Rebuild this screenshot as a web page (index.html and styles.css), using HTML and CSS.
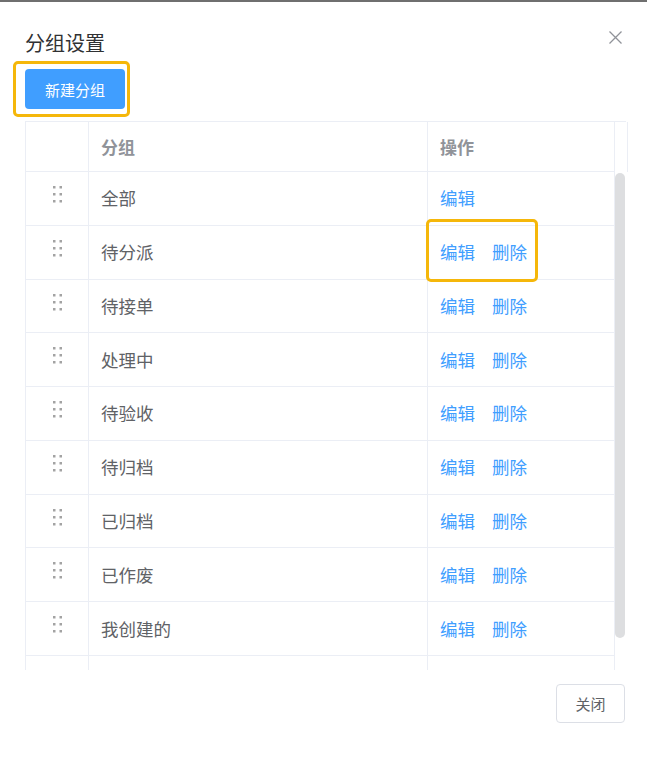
FILE: index.html
```html
<!DOCTYPE html>
<html>
<head>
  <meta charset="UTF-8">
  <title>分组设置</title>
  <link rel="stylesheet" href="styles.css">
</head>
<body>
  <div class="dialog">
    <div class="dialog-header">
      <span class="dialog-title">分组设置</span>
      <button class="dialog-close" type="button" aria-label="关闭">
        <svg width="13" height="13" viewBox="0 0 13 13"><path d="M0.5 0.5 L12.5 12.5 M12.5 0.5 L0.5 12.5" stroke="#909399" stroke-width="1.3" fill="none"/></svg>
      </button>
    </div>

    <div class="toolbar">
      <button class="btn-primary" type="button">新建分组</button>
    </div>

    <div class="group-table">
      <div class="table-head">
        <div class="cell cell-drag"></div>
        <div class="cell">分组</div>
        <div class="cell">操作</div>
        <div class="cell cell-gutter"></div>
      </div>
      <div class="table-body-wrap">
        <div class="table-body" id="table-body"></div>
        <div class="scrollbar"><div class="scrollbar-thumb"></div></div>
      </div>
    </div>

    <div class="dialog-footer">
      <button class="btn-default" type="button">关闭</button>
    </div>

    <!-- 标注框 -->
    <div class="mark mark-btn"></div>
    <div class="mark mark-ops"></div>
  </div>

  <script>
    const groups = ['全部', '待分派', '待接单', '处理中', '待验收', '待归档', '已归档', '已作废', '我创建的', ''];
    const body = document.getElementById('table-body');
    const dots = '<svg class="drag-icon" width="9" height="17" viewBox="0 0 9 17">' +
      '<rect x="0" y="0" width="2.5" height="2.5"/><rect x="6.5" y="0" width="2.5" height="2.5"/>' +
      '<rect x="0" y="7" width="2.5" height="2.5"/><rect x="6.5" y="7" width="2.5" height="2.5"/>' +
      '<rect x="0" y="14" width="2.5" height="2.5"/><rect x="6.5" y="14" width="2.5" height="2.5"/></svg>';

    groups.forEach((name, i) => {
      const row = document.createElement('div');
      row.className = 'table-row';
      let ops = '';
      if (name) {
        ops = '<a class="link">编辑</a>';
        if (i > 0) {
          ops += '<a class="link">删除</a>';
        }
      }
      row.innerHTML =
        '<div class="cell cell-drag">' + dots + '</div>' +
        '<div class="cell">' + name + '</div>' +
        '<div class="cell cell-ops">' + ops + '</div>';
      body.appendChild(row);
    });
  </script>
</body>
</html>
```

FILE: styles.css
```css
/* 页面 */
body {
  margin: 0;
  padding: 0;
  background-color: #fff;
  font-family: "Noto Sans CJK SC", "Microsoft YaHei", sans-serif;
}

button {
  font-family: inherit;
}

/* 弹窗 */
.dialog {
  position: relative;
  height: 758px;
  border-top: 2px solid #6f6f6f;
  padding: 0 22px 0 25px;
  background-color: #fff;
}

.dialog-header {
  display: flex;
  justify-content: space-between;
  align-items: flex-start;
  padding-top: 29px;
}

.dialog-title {
  font-size: 20px;
  line-height: 24px;
  color: #303133;
}

.dialog-close {
  border: none;
  background: none;
  padding: 0;
  margin: 0 3px 0 0;
  width: 13px;
  height: 13px;
  display: flex;
  cursor: pointer;
}

/* 工具栏 */
.toolbar {
  margin-top: 14px;
}

.btn-primary {
  width: 100px;
  height: 40px;
  border: none;
  border-radius: 4px;
  background-color: #409eff;
  color: #fff;
  font-size: 15px;
  cursor: pointer;
}

/* 表格 */
.group-table {
  margin-top: 12px;
  width: 601px;
  border-left: 1px solid #ebeef5;
  box-sizing: border-box;
}

.table-head,
.table-row {
  display: grid;
  grid-template-columns: 63px 339px 187px;
}

.table-head {
  grid-template-columns: 63px 339px 187px 11px;
  height: 51px;
  border-top: 1px solid #ebeef5;
  box-sizing: border-box;
}

.table-head .cell {
  font-weight: bold;
  font-size: 17px;
  color: #909399;
  border-bottom: 1px solid #ebeef5;
}

.table-head .cell-gutter {
  border-bottom: none;
}

.cell {
  display: flex;
  align-items: center;
  padding-left: 12px;
  border-right: 1px solid #ebeef5;
  box-sizing: border-box;
  font-size: 17.5px;
  color: #606266;
  line-height: 24px;
}

.cell-drag {
  justify-content: center;
  align-items: flex-start;
  padding: 14px 0 0 0;
}

.drag-icon {
  fill: #a3a3a3;
}

.table-body-wrap {
  display: flex;
  height: 498px;
}

.table-body {
  width: 589px;
  overflow: hidden;
}

.scrollbar {
  width: 11px;
  padding: 1px 1px 0 0;
  box-sizing: border-box;
}

.scrollbar-thumb {
  height: 465px;
  border-radius: 5px;
  background-color: #dddee0;
}

.table-row {
  height: 53.78px;
}

.table-row .cell {
  border-bottom: 1px solid #ebeef5;
}

.link {
  color: #409eff;
  cursor: pointer;
  margin-right: 17px;
}

/* 底部 */
.dialog-footer {
  display: flex;
  justify-content: flex-end;
  margin-top: 14px;
}

.btn-default {
  width: 69px;
  height: 39px;
  border: 1px solid #dcdfe6;
  border-radius: 4px;
  background-color: #fff;
  color: #606266;
  font-size: 15px;
  cursor: pointer;
}

/* 标注框 */
.mark {
  position: absolute;
  border: 3px solid #f5b70a;
  border-radius: 5px;
  box-sizing: border-box;
  pointer-events: none;
}

.mark-btn {
  left: 13px;
  top: 59px;
  width: 117px;
  height: 56px;
}

.mark-ops {
  left: 426px;
  top: 217px;
  width: 112px;
  height: 63px;
}
```
